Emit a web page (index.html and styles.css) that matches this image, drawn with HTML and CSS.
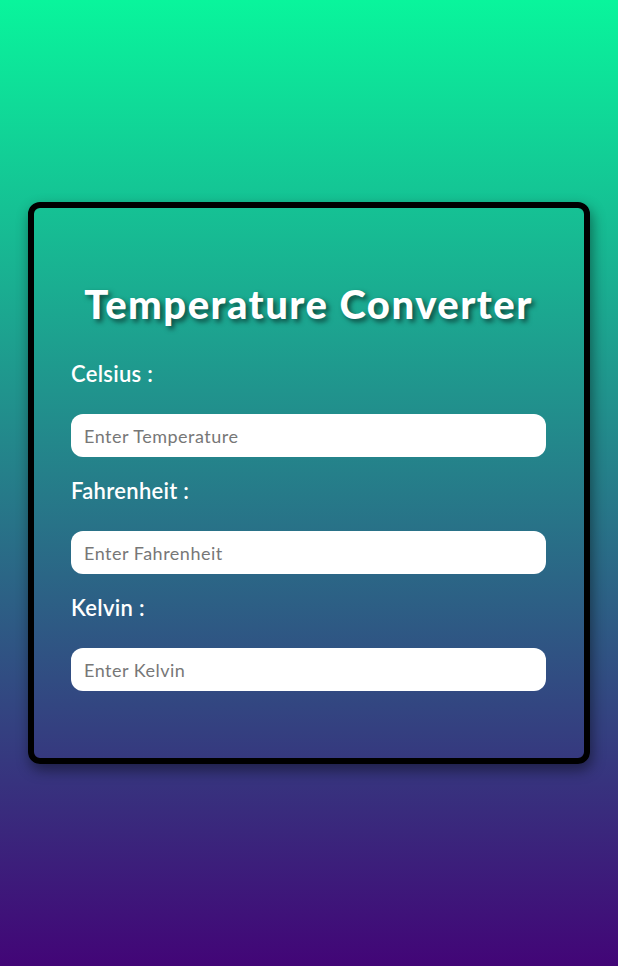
FILE: index.html
```html
<!DOCTYPE html>
<html lang="en">
<head>
<meta charset="UTF-8">
<title>Temperature Converter</title>
<link rel="stylesheet" href="styles.css">
</head>
<body>
  <main class="card">
    <h1 class="title">Temperature Converter</h1>
    <div class="field">
      <label class="label" for="c">Celsius :</label>
      <input class="input" id="c" type="text" placeholder="Enter Temperature">
    </div>
    <div class="field">
      <label class="label" for="f">Fahrenheit :</label>
      <input class="input" id="f" type="text" placeholder="Enter Fahrenheit">
    </div>
    <div class="field">
      <label class="label" for="k">Kelvin :</label>
      <input class="input" id="k" type="text" placeholder="Enter Kelvin">
    </div>
  </main>
</body>
</html>
```
FILE: styles.css
```css
* { box-sizing: border-box; }
html, body { margin: 0; padding: 0; }
body {
  min-height: 966px;
  background: linear-gradient(180deg, #09f59c 0%, #420577 100%);
  font-family: "Lato", "Noto Sans", sans-serif;
  display: flex;
  align-items: center;
  justify-content: center;
}
.card {
  width: 562px;
  height: 562px;
  border: 6px solid #000;
  border-radius: 12px;
  box-shadow: 2px 6px 14px rgba(0,0,0,0.45);
  padding: 66px 38px 0 37px;
  display: flex;
  flex-direction: column;
}
.title {
  margin: 0 0 24px;
  text-align: center;
  color: #fff;
  font-size: 40px;
  font-weight: 900;
  line-height: 60px;
  letter-spacing: 1.5px;
  text-shadow: 3px 3px 5px rgba(0,0,0,0.55);
}
.field {
  display: flex;
  flex-direction: column;
  margin-bottom: 18px;
}
.label {
  color: #fff;
  font-size: 22px;
  font-weight: 600;
  line-height: 32px;
  letter-spacing: 0.3px;
  margin-bottom: 24px;
}
.input {
  width: 475px;
  height: 43px;
  border: none;
  border-radius: 12px;
  background: #fff;
  padding: 0 13px;
  font-family: inherit;
  font-size: 18px;
  letter-spacing: 0.5px;
  color: #333;
  outline: none;
}
.input::placeholder { color: #777; }
```
